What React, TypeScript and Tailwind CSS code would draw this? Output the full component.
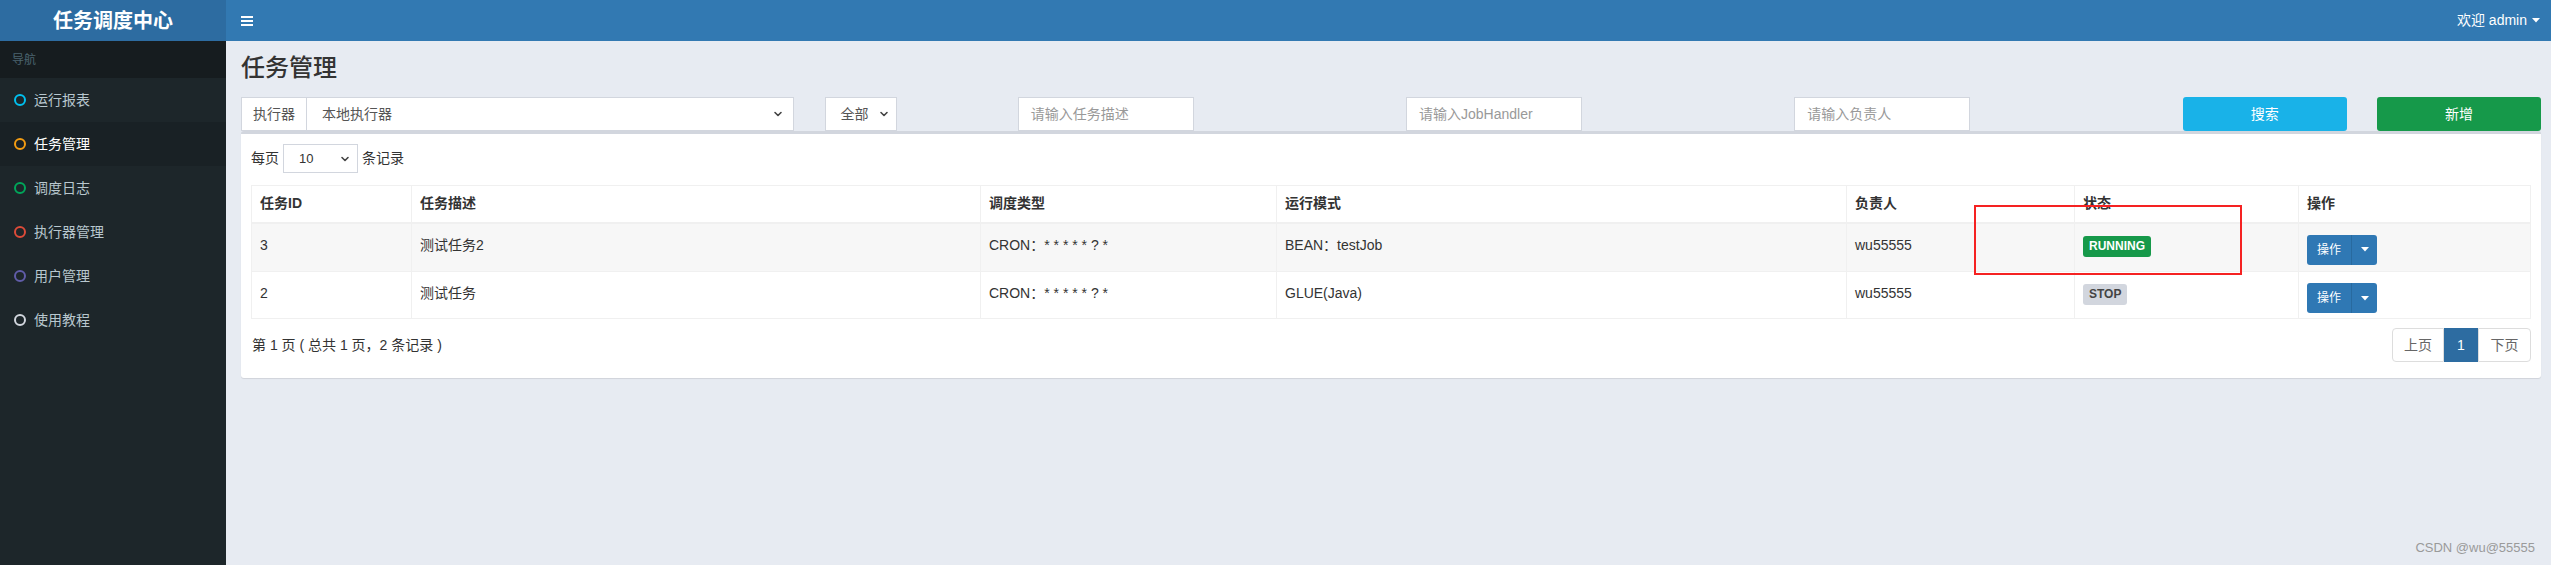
import React from "react";

const menu = [
  { label: "运行报表", color: "border-[#00c0ef]" },
  { label: "任务管理", color: "border-[#f39c12]", active: true },
  { label: "调度日志", color: "border-[#00a65a]" },
  { label: "执行器管理", color: "border-[#dd4b39]" },
  { label: "用户管理", color: "border-[#605ca8]" },
  { label: "使用教程", color: "border-[#d2d6de]" },
];

const jobs = [
  { id: "3", desc: "测试任务2", cron: "CRON：* * * * * ? *", mode: "BEAN：testJob", author: "wu55555", running: true },
  { id: "2", desc: "测试任务", cron: "CRON：* * * * * ? *", mode: "GLUE(Java)", author: "wu55555", running: false },
];

const Chevron = ({ className = "" }: { className?: string }) => (
  <svg width="10" height="10" viewBox="0 0 10 10" className={className} fill="none" stroke="#444" strokeWidth="1.6" strokeLinecap="round" strokeLinejoin="round">
    <polyline points="2 3.5 5 6.5 8 3.5" />
  </svg>
);

const Caret = () => (
  <svg width="8" height="5" viewBox="0 0 8 5" fill="currentColor">
    <polygon points="0,0 8,0 4,4.5" />
  </svg>
);

const App = () => {
  return (
    <div
      className="relative w-full h-[565px] overflow-hidden flex flex-col text-[14px] text-[#333]"
      style={{ fontFamily: "'Liberation Sans', 'Noto Sans CJK SC', sans-serif" }}
    >
      {/* top bar */}
      <header className="flex h-[41px] shrink-0">
        <div className="w-[226px] bg-[#2d6ca1] flex items-center justify-center text-white text-[20px] font-bold">
          任务调度中心
        </div>
        <div className="flex-1 bg-[#3279b2] flex items-center justify-between pl-[15px] pr-[11px]">
          <div className="flex flex-col gap-[2px]">
            <span className="block w-[12px] h-[2px] bg-white" />
            <span className="block w-[12px] h-[2px] bg-white" />
            <span className="block w-[12px] h-[2px] bg-white" />
          </div>
          <div className="flex items-center gap-[5px] text-white text-[14px]">
            欢迎 admin
            <Caret />
          </div>
        </div>
      </header>

      <div className="flex flex-1 min-h-0">
        {/* sidebar */}
        <aside className="w-[226px] shrink-0 bg-[#1d262a]">
          <div className="h-[37px] bg-[#161c1f] flex items-center pl-[12px] text-[12px] text-[#4b646f]">导航</div>
          {menu.map((m) => (
            <div
              key={m.label}
              className={`h-[44px] flex items-center pl-[14px] gap-[8px] ${m.active ? "bg-[#192125] text-white" : "text-[#b8c7ce]"}`}
            >
              <span className={`w-[12px] h-[12px] rounded-full border-2 ${m.color}`} />
              <span>{m.label}</span>
            </div>
          ))}
        </aside>

        {/* content */}
        <main className="flex-1 bg-[#e7ebf2] pl-[15px] pr-[10px] pt-[14px]">
          <h1 className="text-[24px] leading-[26px] font-medium text-[#333] mb-[16px]">任务管理</h1>

          <div className="grid grid-cols-12 gap-x-[30px] h-[34px]">
            <div className="col-span-3 flex h-[34px] border border-[#d2d6de] bg-white">
              <div className="w-[65px] flex items-center justify-center border-r border-[#d2d6de] text-[#555]">执行器</div>
              <div className="flex-1 flex items-center justify-between pl-[15px] pr-[10px] text-[#555]">
                本地执行器
                <Chevron />
              </div>
            </div>
            <div className="col-span-1">
              <div className="w-[72px] h-[34px] ml-[1px] flex items-center justify-between pl-[15px] pr-[7px] border border-[#d2d6de] bg-white text-[#555]">
                全部
                <Chevron />
              </div>
            </div>
            <div className="col-span-2">
              <div className="w-[176px] h-[34px] flex items-center pl-[12px] border border-[#d2d6de] bg-white text-[#999]">请输入任务描述</div>
            </div>
            <div className="col-span-2">
              <div className="w-[176px] h-[34px] flex items-center pl-[12px] border border-[#d2d6de] bg-white text-[#999]">请输入JobHandler</div>
            </div>
            <div className="col-span-2">
              <div className="w-[176px] h-[34px] flex items-center pl-[12px] border border-[#d2d6de] bg-white text-[#999]">请输入负责人</div>
            </div>
            <div className="col-span-1">
              <div className="h-[34px] rounded-[3px] bg-[#19b2e8] text-white flex items-center justify-center">搜索</div>
            </div>
            <div className="col-span-1">
              <div className="h-[34px] rounded-[3px] bg-[#16994a] text-white flex items-center justify-center">新增</div>
            </div>
          </div>

          {/* box */}
          <section className="bg-white border-t-[3px] border-[#d2d6de] rounded-[3px] shadow-[0_1px_1px_rgba(0,0,0,0.1)] p-[10px] pb-[16px]">
            <div className="flex items-center h-[29px] gap-[4px]">
              <span>每页</span>
              <div className="w-[75px] h-[29px] flex items-center justify-between pl-[15px] pr-[7px] border border-[#d2d6de] text-[13px]">
                10
                <Chevron />
              </div>
              <span>条记录</span>
            </div>

            <table className="mt-[12px] w-full table-fixed border-collapse border border-[#f0f0f0]">
              <colgroup>
                <col className="w-[160px]" />
                <col className="w-[569px]" />
                <col className="w-[296px]" />
                <col className="w-[570px]" />
                <col className="w-[228px]" />
                <col className="w-[224px]" />
                <col />
              </colgroup>
              <thead>
                <tr className="border-b-2 border-[#f0f0f0]">
                  {["任务ID", "任务描述", "调度类型", "运行模式", "负责人", "状态", "操作"].map((h) => (
                    <th key={h} className="h-[37px] px-[8px] text-left font-bold border-x border-[#f0f0f0]">
                      {h}
                    </th>
                  ))}
                </tr>
              </thead>
              <tbody>
                {jobs.map((j, i) => (
                  <tr key={j.id} className={i === 0 ? "bg-[#f7f7f7] h-[49px]" : "bg-white h-[47px]"}>
                    {[j.id, j.desc, j.cron, j.mode, j.author].map((c, k) => (
                      <td key={k} className="align-top px-[8px] pt-[11px] leading-[20px] border border-[#f0f0f0]">
                        {c}
                      </td>
                    ))}
                    <td className="align-top px-[8px] pt-[11px] border border-[#f0f0f0]">
                      {j.running ? (
                        <span className="inline-block px-[6px] h-[21px] leading-[21px] rounded-[3px] bg-[#16994a] text-white text-[12px] font-bold">RUNNING</span>
                      ) : (
                        <span className="inline-block px-[6px] h-[21px] leading-[21px] rounded-[3px] bg-[#d2d6de] text-[#444] text-[12px] font-bold">STOP</span>
                      )}
                    </td>
                    <td className="align-top px-[8px] pt-[11px] border border-[#f0f0f0]">
                      <div className="inline-flex h-[30px] rounded-[3px] overflow-hidden bg-[#2f78b4] text-white text-[12px]">
                        <span className="w-[45px] flex items-center justify-center border-r border-[#286a9f]">操作</span>
                        <span className="w-[25px] flex items-center justify-center">
                          <Caret />
                        </span>
                      </div>
                    </td>
                  </tr>
                ))}
              </tbody>
            </table>

            <div className="flex items-center justify-between mt-[9px]">
              <span className="pl-[1px]">第 1 页 ( 总共 1 页，2 条记录 )</span>
              <div className="flex h-[34px] text-[14px]">
                <span className="w-[52px] flex items-center justify-center border border-[#ddd] rounded-l-[4px] text-[#666]">上页</span>
                <span className="w-[34px] flex items-center justify-center bg-[#2d6ca1] text-white">1</span>
                <span className="w-[53px] flex items-center justify-center border border-[#ddd] rounded-r-[4px] text-[#666]">下页</span>
              </div>
            </div>
          </section>
        </main>
      </div>

      {/* annotation rectangle */}
      <div className="absolute left-[1974px] top-[205px] w-[268px] h-[70px] border-2 border-[#f52222]" />

      {/* watermark */}
      <div className="absolute right-[16px] bottom-[8px] text-[13px] text-[#9a9a9a]">CSDN @wu@55555</div>
    </div>
  );
};

export default App;
